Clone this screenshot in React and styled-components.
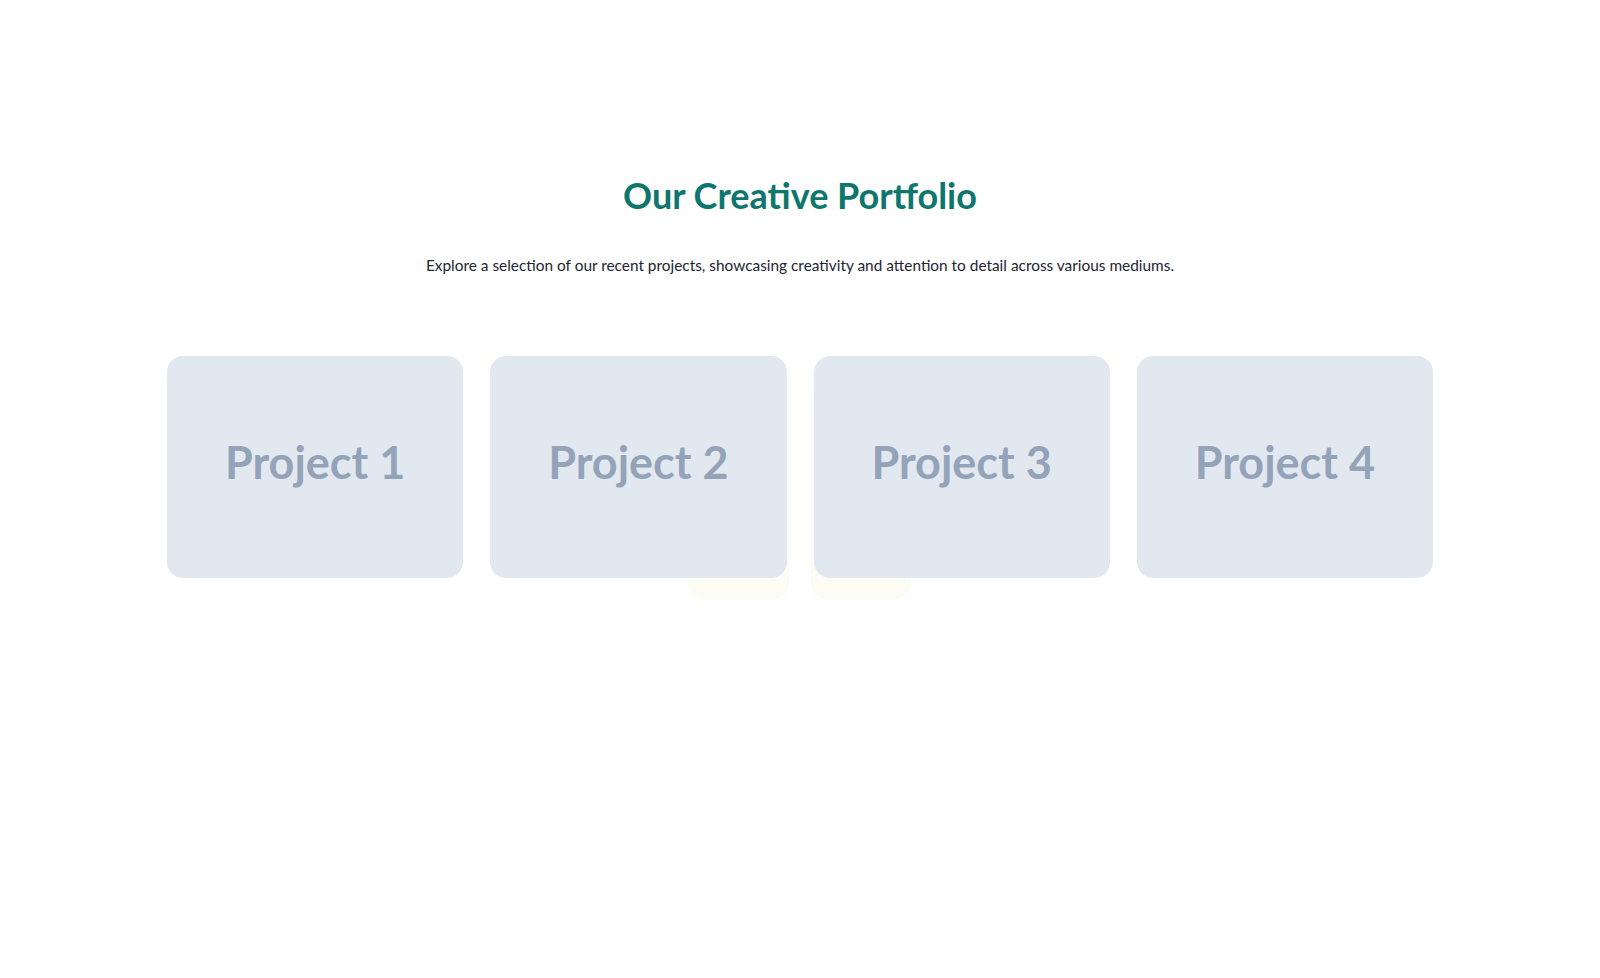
import styled, { createGlobalStyle } from 'styled-components';

const GlobalStyle = createGlobalStyle`
  body {
    margin: 0;
    background: #ffffff;
    font-family: "Lato", "Liberation Sans", sans-serif;
  }
`

const StSection = styled.section`
  padding: 175px 0 120px;
  display: flex;
  flex-direction: column;
  align-items: center;
`

const StTitle = styled.h2`
  margin: 0 0 38px;
  font-size: 36px;
  line-height: 40px;
  font-weight: 700;
  color: #0f766e;
  text-align: center;
`

const StLead = styled.p`
  margin: 0 0 79px;
  font-size: 15.4px;
  line-height: 24px;
  color: #1e2533;
  text-align: center;
`

const StGrid = styled.div`
  position: relative;
  width: 1266px;
  display: grid;
  grid-template-columns: repeat(4, 1fr);
  gap: 27px;
`

const StGlow = styled.div`
  position: absolute;
  z-index: 0;
  border-radius: 16px;
  background: #fcfcf5;
`

const StCard = styled.div`
  position: relative;
  z-index: 1;
  aspect-ratio: 4 / 3;
  border-radius: 16px;
  background: #e2e8f0;
  display: flex;
  align-items: center;
  justify-content: center;
  padding-bottom: 11px;
  box-sizing: border-box;

  span {
    font-size: 45px;
    font-weight: 700;
    color: #94a3b8;
  }
`

const projects = ['Project 1', 'Project 2', 'Project 3', 'Project 4'];

export default function App() {
    return <>
        <GlobalStyle/>
        <StSection id="portfolio-section">
            <StTitle>Our Creative Portfolio</StTitle>
            <StLead>Explore a selection of our recent projects, showcasing creativity and attention to detail across various mediums.</StLead>
            <StGrid>
                <StGlow style={{left: 521, top: 4, width: 101, height: 239}}/>
                <StGlow style={{left: 644, top: 34, width: 100, height: 209}}/>
                {projects.map((name) => (
                    <StCard key={name}><span>{name}</span></StCard>
                ))}
            </StGrid>
        </StSection>
    </>
}
